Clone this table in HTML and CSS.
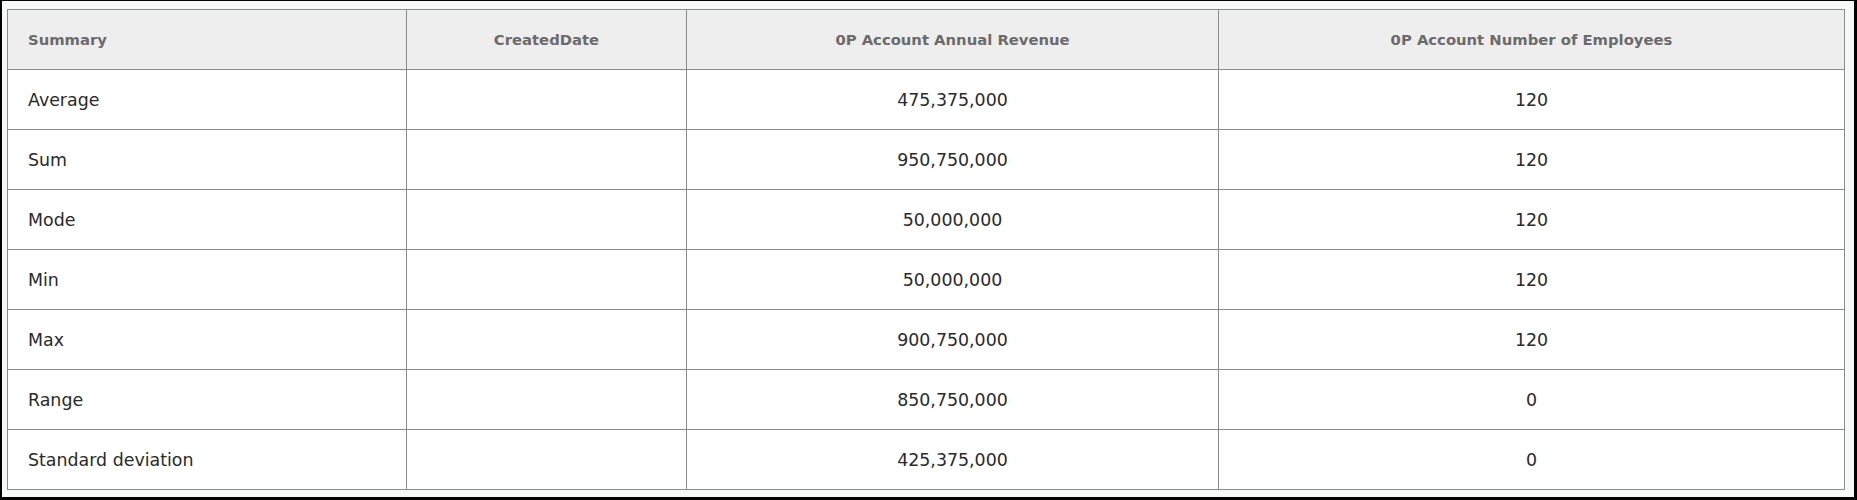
FILE: index.html
```html
<!DOCTYPE html>
<html>
<head>
<meta charset="utf-8">
<link rel="stylesheet" href="styles.css">
</head>
<body>
<div class="frame">
  <table class="summary">
    <colgroup>
      <col class="c1"><col class="c2"><col class="c3"><col class="c4">
    </colgroup>
    <thead>
      <tr>
        <th class="left">Summary</th>
        <th>CreatedDate</th>
        <th>0P Account Annual Revenue</th>
        <th>0P Account Number of Employees</th>
      </tr>
    </thead>
    <tbody>
      <tr><td class="left">Average</td><td></td><td>475,375,000</td><td>120</td></tr>
      <tr><td class="left">Sum</td><td></td><td>950,750,000</td><td>120</td></tr>
      <tr><td class="left">Mode</td><td></td><td>50,000,000</td><td>120</td></tr>
      <tr><td class="left">Min</td><td></td><td>50,000,000</td><td>120</td></tr>
      <tr><td class="left">Max</td><td></td><td>900,750,000</td><td>120</td></tr>
      <tr><td class="left">Range</td><td></td><td>850,750,000</td><td>0</td></tr>
      <tr><td class="left">Standard deviation</td><td></td><td>425,375,000</td><td>0</td></tr>
    </tbody>
  </table>
</div>
</body>
</html>
```
FILE: styles.css
```css
html, body {
  margin: 0;
  padding: 0;
  background: #000;
}
.frame {
  box-sizing: border-box;
  width: 1857px;
  height: 500px;
  border-style: solid;
  border-color: #000;
  border-width: 1px 3px 3px 2px;
  background: #f7f8f8;
  padding: 8px 0 0 5px;
}
.summary {
  border-collapse: collapse;
  width: 1837px;
  table-layout: fixed;
  font-family: "DejaVu Sans", Verdana, sans-serif;
  background: #fff;
}
.c1 { width: 399px; }
.c2 { width: 280px; }
.c3 { width: 532px; }
.c4 { width: 626px; }
.summary th, .summary td {
  border: 1px solid #8c8c8c;
  height: 60px;
  padding: 0;
  text-align: center;
  box-sizing: border-box;
}
.summary th {
  background: #eeeeee;
  color: #6b6b6b;
  font-size: 14.8px;
  font-weight: bold;
}
.summary td {
  color: #2a2a2a;
  font-size: 17.4px;
}
.summary th.left, .summary td.left {
  text-align: left;
  padding-left: 20px;
}
```
